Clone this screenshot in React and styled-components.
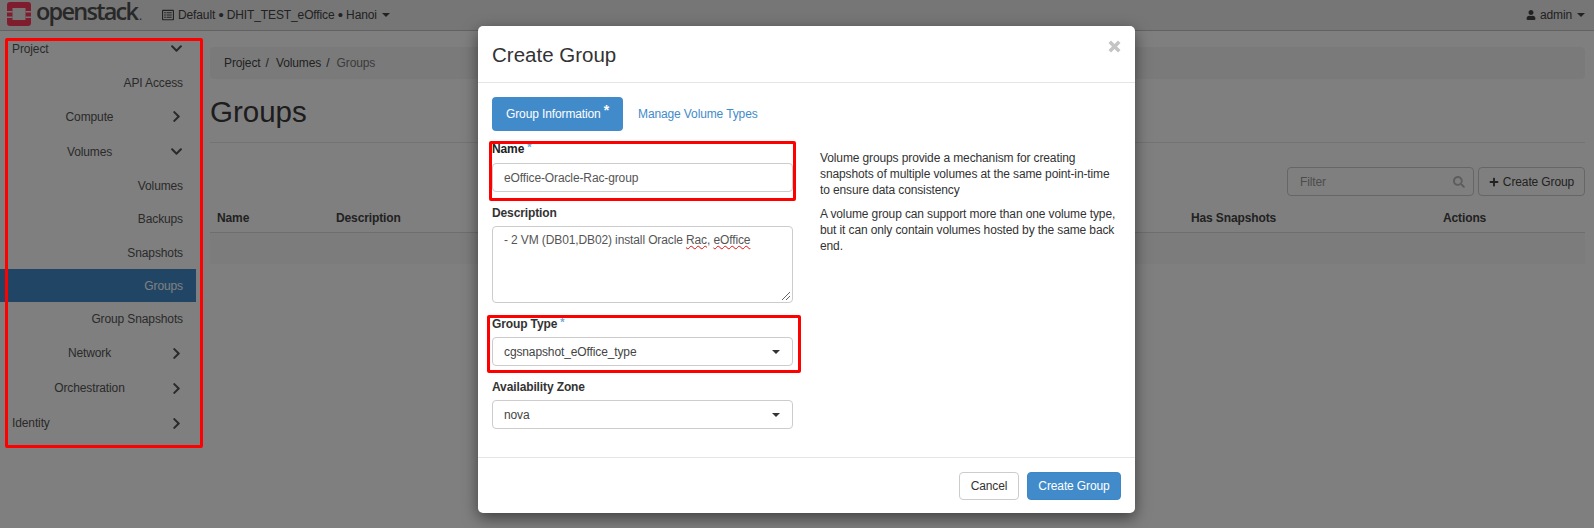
import React from "react";
import styled, { createGlobalStyle } from "styled-components";
import { FaChevronDown, FaChevronRight, FaPlus, FaRegListAlt, FaSearch, FaUser } from "react-icons/fa";

const Global = createGlobalStyle`
  html, body { margin: 0; padding: 0; height: 100%; overflow: hidden; background: #fff; }
  body { font-family: "Liberation Sans", Arial, sans-serif; font-size: 12px; letter-spacing: -0.12px; color: #333; }
  * { box-sizing: border-box; }
`;

const Page = styled.div`position: relative; width: 1594px; height: 528px; overflow: hidden;`;

const TopBar = styled.header`
  height: 31px; display: flex; align-items: center; padding: 0 9px 2px 7px;
  background: #ececec; border-bottom: 1px solid #c4c4c4; color: #444;
`;
const Brand = styled.div`display: flex; align-items: center; gap: 5px; width: 155px; margin-top: -1px;`;
const Wordmark = styled.span`
  font-family: "Open Sans", sans-serif; font-size: 23.5px; line-height: 24px; font-weight: 600; color: #505050;
  letter-spacing: -1.75px; white-space: nowrap; padding-right: 2px;
`;
const Dot = styled.span`font-size: 10px; margin-left: 2px;`;
const Project = styled.div`display: flex; align-items: center; gap: 4px; flex: 1; padding-top: 2px;`;
const Bullet = styled.span`font-size: 15px; line-height: 12px; vertical-align: -1px;`;
const UserMenu = styled.div`display: flex; align-items: center; gap: 4px; padding-top: 2px;`;
const Caret = styled.span`
  display: inline-block; width: 0; height: 0; margin-left: 1px;
  border-top: 4px solid ${p => p.$color || "currentColor"};
  border-left: 4px solid transparent; border-right: 4px solid transparent;
`;

const Layout = styled.div`display: flex; align-items: flex-start;`;
const Sidebar = styled.nav`width: 196px; flex: none; color: #555;`;
const NavRow = styled.div`
  display: flex; align-items: center; height: 35px; padding: 0 12px 0 12px;
`;
const NavLabel = styled.span`flex: 1; text-align: ${p => (p.$left ? "left" : "center")}; padding-right: 2px;`;
const NavIcon = styled.span`
  width: 15px; display: flex; justify-content: center; color: #555; font-size: 13px;
`;
const SubRow = styled.div`
  height: 33.3px; display: flex; align-items: center; justify-content: flex-end; padding-right: 13px;
  background: ${p => (p.$active ? "#428bca" : "transparent")};
  color: ${p => (p.$active ? "#fff" : "#555")};
`;

const Main = styled.main`flex: 1; padding: 16px 9px 0 14px; min-width: 0;`;
const Breadcrumb = styled.div`
  height: 32px; display: flex; align-items: center; gap: 4px; padding: 0 14px;
  background: #f5f5f5; border-radius: 4px; color: #444;
`;
const Crumb = styled.span`color: ${p => (p.$current ? "#777" : "#444")}; margin-right: ${p => (p.$current ? 0 : 1)}px;`;
const Heading = styled.h1`
  margin: 0; height: 64px; padding-top: 17px; border-bottom: 1px solid #e6e6e6; letter-spacing: 0;
  font-size: 29.5px; line-height: 32px; font-weight: 400; color: #3a3a3a;
`;
const Toolbar = styled.div`display: flex; justify-content: flex-end; gap: 4px; margin-top: 24px;`;
const FilterBox = styled.div`
  width: 187px; height: 29px; display: flex; align-items: center; justify-content: space-between;
  padding: 0 8px 0 12px; background: #fff; border: 1px solid #ccc; border-radius: 4px; color: #bbb;
`;
const FilterInput = styled.input`
  border: 0; outline: 0; background: transparent; padding: 0; width: 130px; font: inherit; letter-spacing: inherit;
  &::placeholder { color: #999; opacity: 1; }
`;
const GhostButton = styled.div`
  width: 107px; height: 29px; display: flex; align-items: center; justify-content: center; gap: 4px;
  background: #fff; border: 1px solid #ccc; border-radius: 4px; color: #444;
`;
const TableHead = styled.div`
  height: 37px; display: grid; grid-template-columns: 119px 855px 252px 1fr; align-items: center; padding: 7px 0 0 7px;
  border-bottom: 1px solid #ddd; font-weight: 700; color: #444;
`;
const StripeRow = styled.div`height: 31px; background: #f9f9f9;`;

const Backdrop = styled.div`position: absolute; inset: 0; background: rgba(0,0,0,.5);`;
const Modal = styled.section`
  position: absolute; left: 478px; top: 26px; width: 657px; height: 487px; display: flex; flex-direction: column;
  background: #fff; border-radius: 5px; box-shadow: 0 5px 15px rgba(0,0,0,.5);
`;
const ModalHeader = styled.div`
  height: 57px; flex: none; display: flex; align-items: center; justify-content: space-between;
  padding: 2px 14px 0; border-bottom: 1px solid #e5e5e5;
`;
const ModalTitle = styled.h3`margin: 0; font-size: 20.5px; line-height: 24px; font-weight: 400; letter-spacing: 0; color: #333;`;
const Close = styled.svg`width: 13px; height: 13px; margin: -17px 0 0 0; fill: #c4c4c4;`;
const ModalBody = styled.div`flex: 1; padding: 14px 14px 0;`;
const Tabs = styled.div`display: flex; align-items: center; gap: 15px; margin-bottom: 9px;`;
const TabActive = styled.div`
  width: 131px; height: 34px; display: flex; align-items: center; padding-left: 14px;
  background: #428bca; border-radius: 4px; color: #fff;
`;
const TabLink = styled.div`color: #428bca;`;
const Star = styled.sup`
  font-size: ${p => (p.$tab ? 14 : 11)}px; line-height: 0; font-weight: 700; margin-left: 3px; color: ${p => p.$color};
  position: relative; top: ${p => (p.$tab ? -4 : 3)}px;
`;
const Columns = styled.div`display: grid; grid-template-columns: 301px 301px; column-gap: 27px;`;
const Field = styled.div`margin-bottom: 11.1px;`;
const Label = styled.div`
  height: 18px; line-height: ${p => (p.$dark ? 18 : 20)}px; margin-bottom: 5px; font-weight: 700;
  color: ${p => (p.$dark ? "#222" : "#333")};
`;
const TextInput = styled.input`
  display: block; width: 100%; height: 29px; padding: 0 11px; font: inherit; letter-spacing: inherit; color: #555;
  background: #fff; border: 1px solid #ccc; border-radius: 4px; outline: 0;
`;
const AreaBox = styled.div`
  position: relative; height: 77px; padding: 5px 11px; line-height: 16px; color: #555;
  background: #fff; border: 1px solid #ccc; border-radius: 4px;
`;
const Misspelt = styled.span`text-decoration: underline wavy #e01010 1px; text-underline-offset: 1px;`;
const Grip = styled.svg`position: absolute; right: 1px; bottom: 1px; width: 10px; height: 10px; stroke: #666; stroke-width: 1;`;
const SelectBox = styled.div`
  height: 29px; display: flex; align-items: center; justify-content: space-between; padding: 0 12px 0 11px;
  background: #fff; border: 1px solid #ccc; border-radius: 4px; color: #444;
`;
const Help = styled.div`padding-top: 10px; line-height: 16px; color: #333;`;
const HelpPara = styled.p`margin: 0 0 8px;`;
const ModalFooter = styled.div`
  height: 56.5px; flex: none; display: flex; justify-content: flex-end; gap: 8px; padding: 14px 14px 0;
  border-top: 1px solid #e5e5e5;
`;
const FooterButton = styled.div`
  width: ${p => p.$w}px; height: 28px; display: flex; align-items: center; justify-content: center; border-radius: 4px;
  background: ${p => (p.$primary ? "#428bca" : "#fff")};
  border: 1px solid ${p => (p.$primary ? "#3f86c4" : "#ccc")};
  color: ${p => (p.$primary ? "#fff" : "#333")};
`;
const Highlight = styled.div`
  position: absolute; left: ${p => p.$x}px; top: ${p => p.$y}px; width: ${p => p.$w}px; height: ${p => p.$h}px;
  border: 3px solid #f00; border-radius: 2px; pointer-events: none;
`;

const Logo = () => (
  <svg width="24" height="24" viewBox="0 0 24 24" style={{ flex: "none" }}>
    <rect width="24" height="24" rx="3" fill="#ff3a5c" />
    <rect x="5.5" y="6" width="13" height="12" fill="#ececec" />
    <rect x="0" y="9" width="5.5" height="1.5" fill="#ececec" />
    <rect x="0" y="14.5" width="5.5" height="1.5" fill="#ececec" />
    <rect x="18.5" y="9" width="5.5" height="1.5" fill="#ececec" />
    <rect x="18.5" y="14.5" width="5.5" height="1.5" fill="#ececec" />
  </svg>
);

const NavItem = ({ label, left, open }) => (
  <NavRow>
    <NavLabel $left={left}>{label}</NavLabel>
    <NavIcon>{open ? <FaChevronDown /> : <FaChevronRight />}</NavIcon>
  </NavRow>
);

export default function App() {
  return (
    <Page>
      <Global />
      <TopBar>
        <Brand>
          <Logo />
          <Wordmark>openstack<Dot>.</Dot></Wordmark>
        </Brand>
        <Project>
          <FaRegListAlt size={12} />
          <span>Default <Bullet>•</Bullet> DHIT_TEST_eOffice <Bullet>•</Bullet> Hanoi</span>
          <Caret />
        </Project>
        <UserMenu>
          <FaUser size={10} />
          <span>admin</span>
          <Caret />
        </UserMenu>
      </TopBar>
      <Layout>
        <Sidebar>
          <NavItem label="Project" left open />
          <SubRow>API Access</SubRow>
          <NavItem label="Compute" />
          <NavItem label="Volumes" open />
          <SubRow>Volumes</SubRow>
          <SubRow>Backups</SubRow>
          <SubRow>Snapshots</SubRow>
          <SubRow $active>Groups</SubRow>
          <SubRow>Group Snapshots</SubRow>
          <NavItem label="Network" />
          <NavItem label="Orchestration" />
          <NavItem label="Identity" left />
        </Sidebar>
        <Main>
          <Breadcrumb>
            <Crumb>Project</Crumb><span>/</span>
            <Crumb>&nbsp;Volumes</Crumb><span>/</span>
            <Crumb $current>&nbsp;Groups</Crumb>
          </Breadcrumb>
          <Heading>Groups</Heading>
          <Toolbar>
            <FilterBox>
              <FilterInput placeholder="Filter" readOnly />
              <FaSearch size={12} />
            </FilterBox>
            <GhostButton><FaPlus size={10} /> Create Group</GhostButton>
          </Toolbar>
          <TableHead>
            <span>Name</span><span>Description</span><span>Has Snapshots</span><span>Actions</span>
          </TableHead>
          <StripeRow />
        </Main>
      </Layout>
      <Backdrop />
      <Modal>
        <ModalHeader>
          <ModalTitle>Create Group</ModalTitle>
          <Close viewBox="0 0 13 13"><path d="M3 0.5 6.5 4 10 0.5 12.5 3 9 6.5 12.5 10 10 12.5 6.5 9 3 12.5 0.5 10 4 6.5 0.5 3z" /></Close>
        </ModalHeader>
        <ModalBody>
          <Tabs>
            <TabActive>Group Information<Star $tab $color="#fff">*</Star></TabActive>
            <TabLink>Manage Volume Types</TabLink>
          </Tabs>
          <Columns>
            <div>
              <Field>
                <Label $dark>Name<Star $color="#6fa8dc">*</Star></Label>
                <TextInput value="eOffice-Oracle-Rac-group" readOnly />
              </Field>
              <Field>
                <Label>Description</Label>
                <AreaBox>
                  - 2 VM (DB01,DB02) install Oracle <Misspelt>Rac</Misspelt>, <Misspelt>eOffice</Misspelt>
                  <Grip viewBox="0 0 10 10"><path d="M9 1 1 9M9 5 5 9" /></Grip>
                </AreaBox>
              </Field>
              <Field>
                <Label>Group Type<Star $color="#6fa8dc">*</Star></Label>
                <SelectBox>cgsnapshot_eOffice_type<Caret $color="#333" /></SelectBox>
              </Field>
              <Field>
                <Label>Availability Zone</Label>
                <SelectBox>nova<Caret $color="#333" /></SelectBox>
              </Field>
            </div>
            <Help>
              <HelpPara>Volume groups provide a mechanism for creating snapshots of multiple volumes at the same point-in-time to ensure data consistency</HelpPara>
              <HelpPara>A volume group can support more than one volume type, but it can only contain volumes hosted by the same back end.</HelpPara>
            </Help>
          </Columns>
        </ModalBody>
        <ModalFooter>
          <FooterButton $w={60}>Cancel</FooterButton>
          <FooterButton $w={94} $primary>Create Group</FooterButton>
        </ModalFooter>
      </Modal>
      <Highlight $x={5} $y={38} $w={198} $h={410} />
      <Highlight $x={489} $y={141} $w={307} $h={60} />
      <Highlight $x={487} $y={315} $w={314} $h={58} />
    </Page>
  );
}
